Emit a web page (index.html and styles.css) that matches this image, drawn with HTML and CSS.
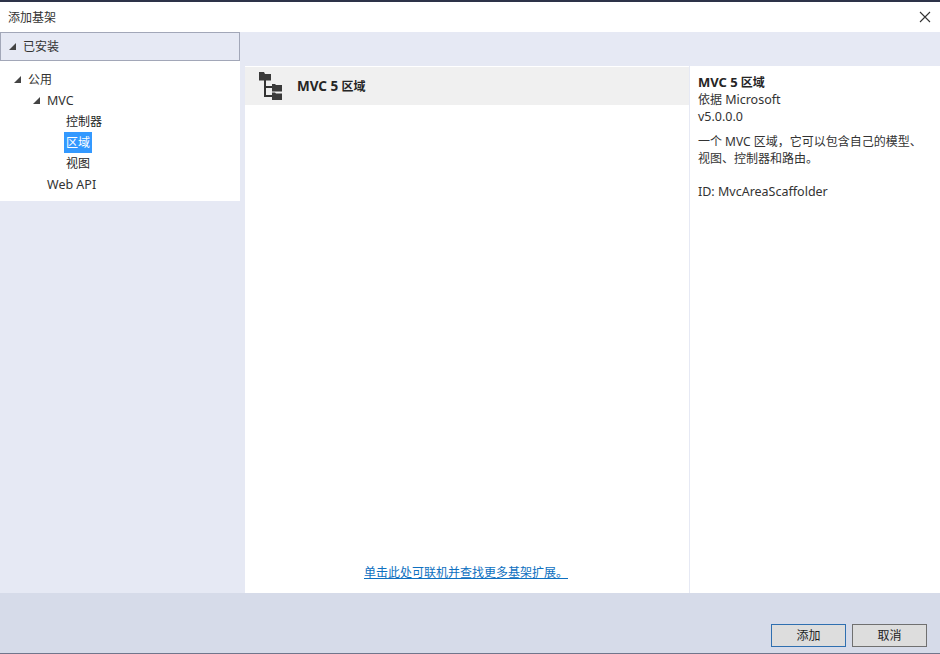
FILE: index.html
```html
<!DOCTYPE html>
<html lang="zh-CN">
<head>
  <meta charset="UTF-8">
  <title>添加基架</title>
  <link rel="stylesheet" href="styles.css">
</head>
<body>
  <div class="dialog">
    <!-- 标题栏 -->
    <header class="title-bar">
      <span class="title">添加基架</span>
      <svg class="close" width="12" height="12" viewBox="0 0 12 12"><path d="M1 1l10 10M11 1L1 11" stroke="#333" stroke-width="1.1" fill="none"/></svg>
    </header>

    <main class="content">
      <!-- 左侧分类 -->
      <aside class="sidebar">
        <div class="installed">
          <svg class="arrow" width="7" height="7" viewBox="0 0 7 7"><path d="M7 0v7H0z" fill="#444"/></svg>
          <span>已安装</span>
        </div>
        <ul class="tree">
          <li class="row level-1"><svg class="arrow" width="7" height="7" viewBox="0 0 7 7"><path d="M7 0v7H0z" fill="#444"/></svg><span>公用</span></li>
          <li class="row level-2"><svg class="arrow" width="7" height="7" viewBox="0 0 7 7"><path d="M7 0v7H0z" fill="#444"/></svg><span class="en">MVC</span></li>
          <li class="row level-3"><span class="label">控制器</span></li>
          <li class="row level-3"><span class="label selected">区域</span></li>
          <li class="row level-3"><span class="label">视图</span></li>
          <li class="row level-2 leaf"><span class="en">Web API</span></li>
        </ul>
      </aside>

      <!-- 中间和右侧 -->
      <div class="panels">
        <section class="list">
          <div class="item">
            <svg class="item-icon" width="24" height="28" viewBox="0 0 24 28">
              <path d="M6 8v17M6 15h8M6 24h8" stroke="#333" stroke-width="2" fill="none"/>
              <path d="M0 0h5l1 2h6v6.500H0zM13 12h3l1 1h6v6.500H13zM13 20.500h3l1 1h6V28H13z" fill="#3a3a3a"/>
            </svg>
            <span class="item-name"><span class="en">MVC 5</span> 区域</span>
          </div>
          <a class="more" href="#">单击此处可联机并查找更多基架扩展。</a>
        </section>
        <section class="details">
          <div class="details-name"><span class="en">MVC 5</span> 区域</div>
          <div>依据 <span class="en">Microsoft</span></div>
          <div class="en">v5.0.0.0</div>
          <p class="desc">一个 MVC 区域，它可以包含自己的模型、视图、控制器和路由。</p>
          <div class="scaffold-id en">ID: MvcAreaScaffolder</div>
        </section>
      </div>
    </main>

    <footer class="footer">
      <button class="btn primary" type="button">添加</button>
      <button class="btn" type="button">取消</button>
    </footer>
  </div>
</body>
</html>
```

FILE: styles.css
```css
* { margin: 0; padding: 0; box-sizing: border-box; }
body { background: #fff; color: #1e1e1e; font-family: "Noto Sans", "Noto Sans CJK SC", sans-serif; font-size: 12px; line-height: 17px; overflow: hidden; }
.dialog { display: flex; flex-direction: column; width: 940px; height: 654px; border-top: 2px solid #2d3248; border-bottom: 1px solid #70768c; }
.en { font-size: 12.5px; }

/* 标题栏 */
.title-bar { display: flex; align-items: center; justify-content: space-between; height: 30px; padding: 0 9px 0 8px; flex: none; }
.title { color: #333; }

/* 主内容 */
.content { display: flex; height: 561px; flex: none; background: #e6e9f4; }
.sidebar { width: 240px; flex: none; }
.installed { display: flex; align-items: center; height: 29px; padding-left: 8px; gap: 7px; background: #e6e9f4; border: 1px solid #a2a7b8; color: #333; }
.tree { list-style: none; background: #fff; height: 140px; padding-top: 8px; }
.row { display: flex; align-items: center; height: 21px; gap: 7px; color: #333; }
.level-1 { padding-left: 14px; }
.level-2 { padding-left: 33px; }
.level-2.leaf { padding-left: 47px; }
.level-3 { padding-left: 64px; }
.label { padding: 0 2px; line-height: 21px; color: #1e1e1e; }
.selected { background: #3399ff; color: #fff; }

.panels { display: flex; flex: 1; margin: 34px 0 0 5px; background: #fff; }
.list { display: flex; flex-direction: column; width: 444px; padding-top: 1px; }
.item { display: flex; align-items: center; gap: 14px; height: 38px; padding-left: 14px; background: #f0f0f0; }
.item-name { font-weight: 700; color: #252525; }
.item-name .en { font-size: 13.5px; }
.more { margin: auto 2px 12px 0; align-self: center; color: #0e70c0; }

.details { flex: 1; padding: 8px 8px 0 8px; border-left: 1px solid #e6e9f4; color: #333; }
.details-name { font-weight: 700; color: #252525; }
.details-name .en { font-size: 13px; }
.desc { margin-top: 8px; }
.scaffold-id { margin-top: 16px; }

/* 底部按钮 */
.footer { display: flex; align-items: flex-end; justify-content: flex-end; gap: 6px; flex: 1; padding: 0 13px 6px 0; background: #d6dbe9; }
.btn { width: 75px; height: 23px; background: #dddddd; border: 1px solid #707070; color: #1e1e1e; font: inherit; }
.btn.primary { border-color: #2f6fb0; }
```
